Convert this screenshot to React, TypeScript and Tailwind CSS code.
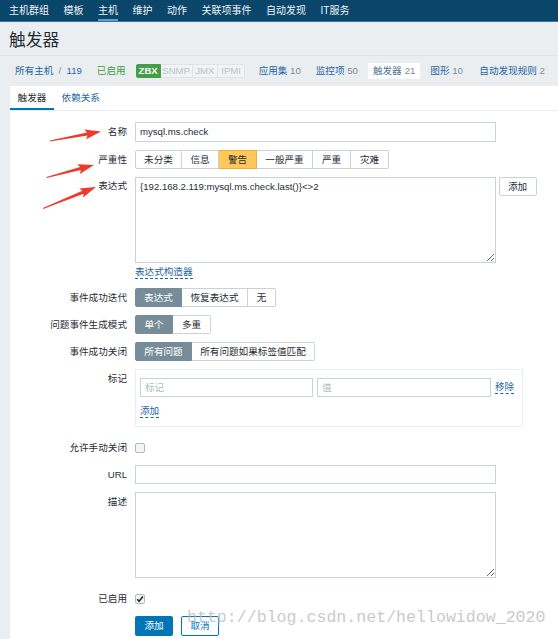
import React from "react";

const navItems = ["主机群组", "模板", "主机", "维护", "动作", "关联项事件", "自动发现", "IT服务"];

// [text, width class]
const severity: [string, string][] = [
  ["未分类", "w-[47px]"],
  ["信息", "w-[37px]"],
  ["警告", "w-[38px]"],
  ["一般严重", "w-[56px]"],
  ["严重", "w-[38px]"],
  ["灾难", "w-[38px]"],
];
const okEvent: [string, string][] = [
  ["表达式", "w-[47px]"],
  ["恢复表达式", "w-[66px]"],
  ["无", "w-[28px]"],
];
const genMode: [string, string][] = [
  ["单个", "w-[38px]"],
  ["多重", "w-[38px]"],
];
const okClose: [string, string][] = [
  ["所有问题", "w-[57px]"],
  ["所有问题如果标签值匹配", "w-[123px]"],
];

function Seg({ items, selected, warn }: { items: [string, string][]; selected: number; warn?: boolean }) {
  return (
    <div className="flex h-[19px]">
      {items.map(([t, w], i) => {
        const on = i === selected;
        let cls = "flex items-center justify-center border-y border-r " + w;
        if (i === 0) cls += " border-l rounded-l-[2px]";
        if (i === items.length - 1) cls += " rounded-r-[2px]";
        if (on && warn) cls += " bg-[#ffc859] border-[#e8b04a] text-[#1f2c33]";
        else if (on) cls += " bg-[#768d99] border-[#768d99] text-white";
        else cls += " bg-white border-[#c9d2d7] text-[#1f2c33]";
        return (
          <div key={t} className={cls}>
            {t}
          </div>
        );
      })}
    </div>
  );
}

function Label({ children, pt }: { children?: React.ReactNode; pt?: string }) {
  return <div className={"w-[117px] shrink-0 text-right " + (pt ?? "")}>{children}</div>;
}

function Check({ on }: { on?: boolean }) {
  return (
    <div className="flex h-[10px] w-[10px] items-center justify-center rounded-[2px] border border-[#acbbc2] bg-[#f2f4f5]">
      {on && (
        <svg width="8" height="8" viewBox="0 0 8 8">
          <path d="M1.2 4.2 L3.1 6.2 L6.9 1.4" fill="none" stroke="#1f2c33" strokeWidth="1.6" />
        </svg>
      )}
    </div>
  );
}

function Arrow({ tail, tip }: { tail: [number, number]; tip: [number, number] }) {
  const dx = tip[0] - tail[0];
  const dy = tip[1] - tail[1];
  const len = Math.hypot(dx, dy);
  const ux = dx / len;
  const uy = dy / len;
  const nx = -uy;
  const ny = ux;
  const bx = tip[0] - ux * 14;
  const by = tip[1] - uy * 14;
  const p = (x: number, y: number) => `${x.toFixed(1)},${y.toFixed(1)}`;
  const pts = [
    p(tail[0] + nx * 0.4, tail[1] + ny * 0.4),
    p(bx + nx * 1.6, by + ny * 1.6),
    p(bx - ux * 2 + nx * 5, by - uy * 2 + ny * 5),
    p(tip[0], tip[1]),
    p(bx - ux * 2 - nx * 5, by - uy * 2 - ny * 5),
    p(bx - nx * 1.6, by - ny * 1.6),
    p(tail[0] - nx * 0.4, tail[1] - ny * 0.4),
  ];
  return <polygon points={pts.join(" ")} fill="#ee3a2b" />;
}

export default function App() {
  return (
    <div className="relative h-[639px] w-[558px] overflow-hidden bg-[#ebeef0] font-['Liberation_Sans','Noto_Sans_CJK_SC',sans-serif] text-[9.6px] leading-[14px] text-[#1f2c33]">
      {/* top menu */}
      <nav className="flex h-[22px] gap-[14.5px] border-b border-[#3f7396] bg-[#0a466a] pl-[9px] text-[10px] text-[#eef2f5]">
        {navItems.map((n) => (
          <div key={n} className={"flex h-full items-center " + (n === "主机" ? "border-b-2 border-[#5aa0d0] pt-[2px]" : "")}>
            {n}
          </div>
        ))}
      </nav>

      <div className="h-[34px] border-b border-[#dde3e6] pl-[9px] pt-[9px] text-[16.8px] leading-[20px] text-[#1f2c33]">触发器</div>

      {/* breadcrumbs */}
      <div className="flex h-[30px] items-center pl-[15px]">
        <span className="text-[#1f65a6]">所有主机</span>
        <span className="ml-[5px] text-[#768d99]">/</span>
        <span className="ml-[5.5px] text-[#1f65a6]">119</span>
        <span className="ml-[15px] text-[#429e47]">已启用</span>
        <div className="ml-[10px] flex h-[14px] text-[9.6px] leading-[12px]">
          <span className="flex w-[25px] items-center justify-center rounded-l-[2px] border border-[#429e47] bg-[#429e47] font-bold text-white">ZBX</span>
          <span className="flex w-[32px] items-center justify-center border-y border-r border-[#dfe4e7] bg-[#f1f3f4] text-[#b9c4ca]">SNMP</span>
          <span className="flex w-[25.5px] items-center justify-center border-y border-r border-[#dfe4e7] bg-[#f1f3f4] text-[#b9c4ca]">JMX</span>
          <span className="flex w-[27px] items-center justify-center rounded-r-[2px] border-y border-r border-[#dfe4e7] bg-[#f1f3f4] text-[#b9c4ca]">IPMI</span>
        </div>
        <span className="ml-[13.5px] text-[#1f65a6]">
          应用集 <span className="text-[#768d99]">10</span>
        </span>
        <span className="ml-[15px] text-[#1f65a6]">
          监控项 <span className="text-[#768d99]">50</span>
        </span>
        <span className="ml-[10px] flex h-[16px] items-center bg-white px-[5px] text-[#4f7494]">
          触发器 <span className="ml-[3px] text-[#768d99]">21</span>
        </span>
        <span className="ml-[10px] text-[#1f65a6]">
          图形 <span className="text-[#768d99]">10</span>
        </span>
        <span className="ml-[16.5px] text-[#1f65a6]">
          自动发现规则 <span className="text-[#768d99]">2</span>
        </span>
      </div>

      {/* card */}
      <div className="ml-[10px] h-[600px] bg-white">
        <div className="flex h-[25px] border-b border-[#ebeef0]">
          <div className="flex h-full items-center border-b-2 border-[#0275b8] px-[7.6px] pt-[2px] text-[#1f2c33]">触发器</div>
          <div className="flex h-full items-center px-[7.6px] text-[#1f65a6]">依赖关系</div>
        </div>

        <div className="flex flex-col">
          <div className="mt-[11px] flex h-[20px] items-center">
            <Label>名称</Label>
            <div className="ml-[8px] flex h-[20px] w-[361px] items-center border border-[#c9d2d7] pl-[4px]">mysql.ms.check</div>
          </div>

          <div className="mt-[8px] flex h-[19px] items-center">
            <Label>严重性</Label>
            <div className="ml-[8px]">
              <Seg items={severity} selected={2} warn />
            </div>
          </div>

          <div className="mt-[8px] flex">
            <Label pt="pt-[2px]">表达式</Label>
            <textarea
              readOnly
              defaultValue="{192.168.2.119:mysql.ms.check.last()}<>2"
              className="ml-[8px] h-[86px] w-[361px] border border-[#c9d2d7] pl-[4px] pt-[2px] text-[9.6px] leading-[14px] text-[#1f2c33] outline-none"
            />
            <div className="ml-[2.5px] flex h-[19px] w-[38px] items-center justify-center rounded-[2px] border border-[#c9d2d7] text-[#1f2c33]">添加</div>
          </div>

          <div className="mt-[2px] flex h-[14px]">
            <Label />
            <span className="ml-[8px] border-b border-dashed border-[#1f65a6] text-[#1f65a6]">表达式构造器</span>
          </div>

          <div className="mt-[9px] flex items-center">
            <Label>事件成功迭代</Label>
            <div className="ml-[8px]">
              <Seg items={okEvent} selected={0} />
            </div>
          </div>

          <div className="mt-[8px] flex items-center">
            <Label>问题事件生成模式</Label>
            <div className="ml-[8px]">
              <Seg items={genMode} selected={0} />
            </div>
          </div>

          <div className="mt-[8px] flex items-center">
            <Label>事件成功关闭</Label>
            <div className="ml-[8px]">
              <Seg items={okClose} selected={0} />
            </div>
          </div>

          <div className="mt-[8px] flex">
            <Label pt="pt-[3px]">标记</Label>
            <div className="ml-[8px] h-[58px] w-[388px] border border-[#ebeef0] pl-[4px] pt-[8px]">
              <div className="flex h-[19px] items-center">
                <div className="flex h-[19px] w-[173px] items-center border border-[#c9d2d7] pl-[4px] text-[#acbbc2]">标记</div>
                <div className="ml-[4px] flex h-[19px] w-[174px] items-center border border-[#c9d2d7] pl-[4px] text-[#acbbc2]">值</div>
                <span className="ml-[4px] border-b border-dashed border-[#1f65a6] leading-[12px] text-[#1f65a6]">移除</span>
              </div>
              <div className="mt-[8px] flex">
                <span className="border-b border-dashed border-[#1f65a6] leading-[12px] text-[#1f65a6]">添加</span>
              </div>
            </div>
          </div>

          <div className="mt-[14px] flex h-[14px] items-center">
            <Label>允许手动关闭</Label>
            <div className="ml-[8px]">
              <Check />
            </div>
          </div>

          <div className="mt-[10px] flex h-[19px] items-center">
            <Label>URL</Label>
            <div className="ml-[8px] h-[19px] w-[361px] border border-[#c9d2d7]" />
          </div>

          <div className="mt-[8px] flex">
            <Label pt="pt-[3px]">描述</Label>
            <textarea readOnly defaultValue="" className="ml-[8px] h-[86px] w-[361px] border border-[#c9d2d7] outline-none" />
          </div>

          <div className="mt-[14px] flex h-[14px] items-center">
            <Label>已启用</Label>
            <div className="ml-[8px]">
              <Check on />
            </div>
          </div>

          <div className="mt-[10px] flex h-[20px]">
            <Label />
            <div className="ml-[8px] flex h-[20px] w-[38px] items-center justify-center rounded-[2px] bg-[#0275b8] text-white">添加</div>
            <div className="ml-[8px] flex h-[20px] w-[38px] items-center justify-center rounded-[2px] border border-[#0275b8] bg-white text-[#0275b8]">取消</div>
          </div>
        </div>
      </div>

      {/* annotation arrows */}
      <svg className="pointer-events-none absolute left-0 top-0" width="558" height="639">
        <Arrow tail={[50, 141]} tip={[101, 131.5]} />
        <Arrow tail={[46.5, 177.5]} tip={[94, 165]} />
        <Arrow tail={[43, 208.5]} tip={[96, 187]} />
      </svg>

      {/* watermark */}
      <div className="pointer-events-none absolute left-[187px] top-[608px] whitespace-nowrap font-['Liberation_Mono',monospace] text-[16.6px] leading-[20px] text-[#bdbdbd] opacity-80">
        http://blog.csdn.net/hellowidow_2020
      </div>
    </div>
  );
}
